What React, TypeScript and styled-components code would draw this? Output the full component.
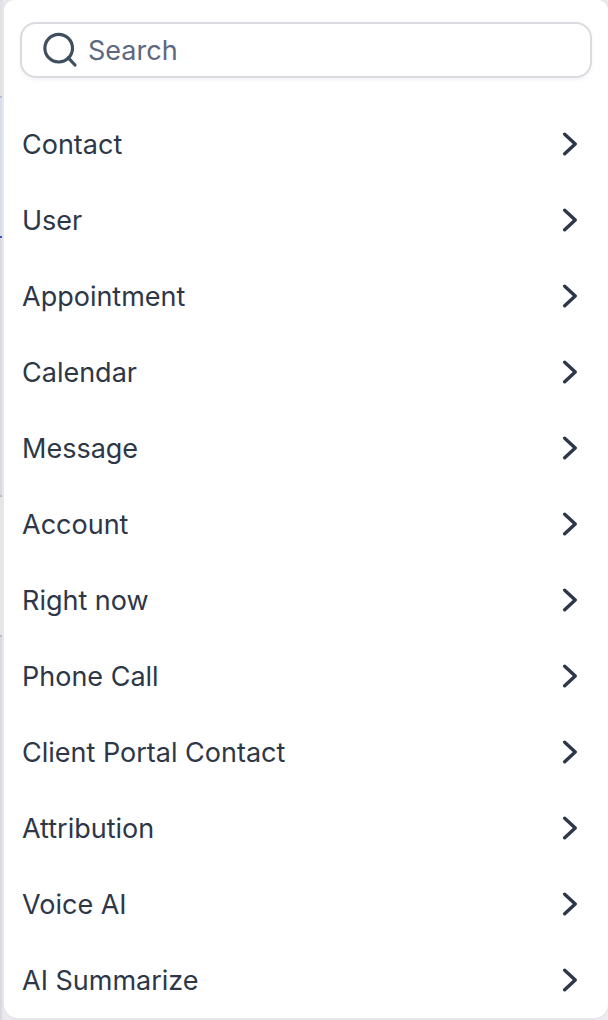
import React, { useState } from "react";
import styled, { createGlobalStyle } from "styled-components";

const GlobalStyle = createGlobalStyle`
  *, *::before, *::after { box-sizing: border-box; }
  body {
    margin: 0;
    background: #ececf0;
    font-family: Inter, "Liberation Sans", sans-serif;
    color: #2d3748;
  }
`;

const Page = styled.div`
  display: flex;
  min-height: 100vh;
`;

const Canvas = styled.div`
  display: flex;
  flex-direction: column;
  width: 4px;
  flex: none;
  border-right: 2px solid #e6e7eb;
`;

const Segment = styled.div<{ $size?: number; $fill: string; $line?: string }>`
  flex: ${(p) => (p.$size ? "none" : "1")};
  height: ${(p) => (p.$size ? `${p.$size}px` : "auto")};
  background: ${(p) => p.$fill};
  border-bottom: ${(p) => (p.$line ? `2px solid ${p.$line}` : "none")};
`;

const Panel = styled.main`
  flex: 1;
  min-width: 0;
  align-self: flex-start;
  padding: 22px 16px 0;
  background: #ffffff;
  border-radius: 10px 10px 14px 14px;
  box-shadow: 0 0 0 2px #e6e7eb;
`;

const SearchField = styled.label`
  display: flex;
  align-items: center;
  gap: 10px;
  height: 56px;
  padding: 0 20px;
  border: 2px solid #dadae0;
  border-radius: 16px;
  box-shadow: 0 2px 4px rgba(16, 24, 40, 0.05);
`;

const SearchIcon = styled.svg`
  flex: none;
  width: 36px;
  height: 36px;
  color: #3f4f60;
`;

const SearchInput = styled.input`
  flex: 1;
  min-width: 0;
  padding: 2px 0 0;
  border: 0;
  outline: 0;
  background: transparent;
  font: inherit;
  font-size: 27px;
  line-height: 36px;
  color: #2d3748;

  &::placeholder {
    color: #5d6880;
    opacity: 1;
  }
`;

const Menu = styled.ul`
  margin: 28px 0 0;
  padding: 0;
  list-style: none;
`;

const MenuButton = styled.button`
  display: flex;
  align-items: center;
  justify-content: space-between;
  width: 100%;
  height: 76px;
  padding: 0 14px 0 2px;
  border: 0;
  background: transparent;
  font: inherit;
  font-size: 27px;
  line-height: 36px;
  color: inherit;
  text-align: left;
  cursor: pointer;
`;

const MenuLabel = styled.span`
  padding-top: 2px;
`;

const Chevron = styled.svg`
  flex: none;
  width: 16px;
  height: 24px;
`;

const categories = [
  "Contact",
  "User",
  "Appointment",
  "Calendar",
  "Message",
  "Account",
  "Right now",
  "Phone Call",
  "Client Portal Contact",
  "Attribution",
  "Voice AI",
  "AI Summarize",
];

export default function App() {
  const [query, setQuery] = useState("");
  const shown = categories.filter((name) =>
    name.toLowerCase().includes(query.trim().toLowerCase())
  );

  return (
    <>
      <GlobalStyle />
      <Page>
        <Canvas aria-hidden="true">
          <Segment $size={98} $fill="#e2e2e5" $line="#b4bedc" />
          <Segment $size={140} $fill="#d9dcea" $line="#2f55d4" />
          <Segment $size={259} $fill="#d9dadd" $line="#bcbdc4" />
          <Segment $size={140} $fill="#e4e5e7" $line="#bcbdc4" />
          <Segment $fill="#d9dadd" />
        </Canvas>
        <Panel>
          <SearchField>
            <SearchIcon viewBox="0 0 36 36" fill="none" aria-hidden="true">
              <circle cx="16.7" cy="16.2" r="13.8" stroke="currentColor" strokeWidth="3.2" />
              <path
                d="M26.3 25.8l6.7 7.2"
                stroke="currentColor"
                strokeWidth="3.2"
                strokeLinecap="round"
              />
            </SearchIcon>
            <SearchInput
              type="text"
              placeholder="Search"
              aria-label="Search"
              value={query}
              onChange={(e) => setQuery(e.target.value)}
            />
          </SearchField>
          <Menu>
            {shown.map((name) => (
              <li key={name}>
                <MenuButton type="button">
                  <MenuLabel>{name}</MenuLabel>
                  <Chevron viewBox="0 0 16 24" fill="none" aria-hidden="true">
                    <path
                      d="M2.7 2.2L13.2 12 2.7 21.8"
                      stroke="currentColor"
                      strokeWidth="3.4"
                      strokeLinecap="round"
                      strokeLinejoin="round"
                    />
                  </Chevron>
                </MenuButton>
              </li>
            ))}
          </Menu>
        </Panel>
      </Page>
    </>
  );
}
